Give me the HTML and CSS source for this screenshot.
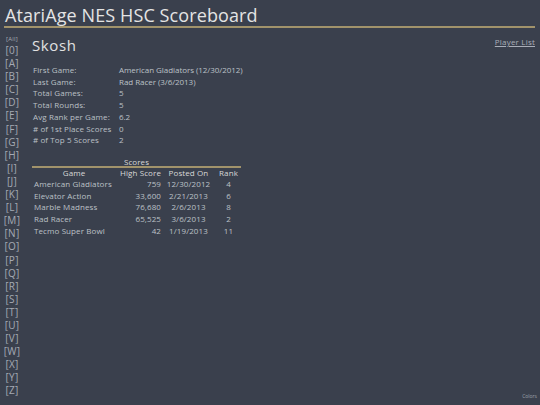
FILE: index.html
```html
<!DOCTYPE html>
<html>
<head>
<meta charset="utf-8">
<link rel="stylesheet" href="styles.css">
</head>
<body>
<header class="top">
  <h1 class="title">AtariAge NES HSC Scoreboard</h1>
</header>
<div class="layout">
  <nav class="letters">
    <a class="all">[All]</a>
    <a>[0]</a><a>[A]</a><a>[B]</a><a>[C]</a><a>[D]</a><a>[E]</a><a>[F]</a><a>[G]</a><a>[H]</a><a>[I]</a><a>[J]</a><a>[K]</a><a>[L]</a><a>[M]</a><a>[N]</a><a>[O]</a><a>[P]</a><a>[Q]</a><a>[R]</a><a>[S]</a><a>[T]</a><a>[U]</a><a>[V]</a><a>[W]</a><a>[X]</a><a>[Y]</a><a>[Z]</a>
  </nav>
  <main class="content">
    <div class="head-row">
      <h2 class="player">Skosh</h2>
      <a class="plist">Player List</a>
    </div>
    <table class="info">
      <tr><td class="lbl">First Game:</td><td>American Gladiators (12/30/2012)</td></tr>
      <tr><td class="lbl">Last Game:</td><td>Rad Racer (3/6/2013)</td></tr>
      <tr><td class="lbl">Total Games:</td><td>5</td></tr>
      <tr><td class="lbl">Total Rounds:</td><td>5</td></tr>
      <tr><td class="lbl">Avg Rank per Game:</td><td>6.2</td></tr>
      <tr><td class="lbl"># of 1st Place Scores</td><td>0</td></tr>
      <tr><td class="lbl"># of Top 5 Scores</td><td>2</td></tr>
    </table>
    <div class="scores">
      <div class="caption">Scores</div>
      <div class="srow shead"><span class="c-game">Game</span><span class="c-score">High Score</span><span class="c-date">Posted On</span><span class="c-rank">Rank</span></div>
      <div class="srow"><span class="c-game">American Gladiators</span><span class="c-score">759</span><span class="c-date">12/30/2012</span><span class="c-rank">4</span></div>
      <div class="srow"><span class="c-game">Elevator Action</span><span class="c-score">33,600</span><span class="c-date">2/21/2013</span><span class="c-rank">6</span></div>
      <div class="srow"><span class="c-game">Marble Madness</span><span class="c-score">76,680</span><span class="c-date">2/6/2013</span><span class="c-rank">8</span></div>
      <div class="srow"><span class="c-game">Rad Racer</span><span class="c-score">65,525</span><span class="c-date">3/6/2013</span><span class="c-rank">2</span></div>
      <div class="srow"><span class="c-game">Tecmo Super Bowl</span><span class="c-score">42</span><span class="c-date">1/19/2013</span><span class="c-rank">11</span></div>
    </div>
  </main>
</div>
<footer class="foot"><a class="colors">Colors</a></footer>
</body>
</html>
```
FILE: styles.css
```css
html, body {
  margin: 0;
  padding: 0;
}
body {
  background: #3a404d;
  color: #c4c7cd;
  font-family: "Open Sans", "DejaVu Sans", sans-serif;
  width: 540px;
  height: 405px;
  overflow: hidden;
  position: relative;
}
.top {
  padding: 4px 5px 0 4px;
}
.title {
  margin: 0;
  font-size: 18px;
  font-weight: normal;
  line-height: 22px;
  color: #e4e4e4;
  padding-left: 1px;
  border-bottom: 2px solid #a1936b;
  letter-spacing: 0.1px;
}
.layout {
  display: flex;
  padding-top: 7px;
}
.letters {
  width: 32px;
  display: flex;
  flex-direction: column;
  align-items: center;
  padding-right: 8px;
  box-sizing: border-box;
}
.letters a {
  font-size: 10px;
  line-height: 13.1px;
  color: #a5aab4;
  letter-spacing: 0.3px;
}
.letters a.all {
  font-size: 6px;
  line-height: 9px;
}
.content {
  flex: 1;
  padding-right: 5px;
}
.head-row {
  display: flex;
  justify-content: space-between;
  align-items: flex-start;
}
.player {
  margin: 0;
  font-size: 15px;
  font-weight: normal;
  color: #e2e2e2;
  line-height: 20px;
  letter-spacing: 0.6px;
}
.plist {
  font-size: 8px;
  color: #a9aeb8;
  text-decoration: underline;
  margin-top: 1px;
  letter-spacing: 0.2px;
}
.info {
  border-collapse: collapse;
  margin-top: 9px;
  font-size: 8px;
  color: #bcc0c7;
  letter-spacing: -0.05px;
}
.info td {
  padding: 0 0 0 1px;
  height: 11.7px;
  line-height: 11.7px;
  white-space: nowrap;
}
.info td.lbl {
  width: 85px;
  letter-spacing: 0.1px;
}
.scores {
  margin-top: 11px;
  font-size: 8px;
  color: #bcc0c7;
  width: 209px;
  letter-spacing: 0.1px;
}
.caption {
  color: #d8d8d8;
  line-height: 9px;
  border-bottom: 2px solid #a1936b;
  text-align: center;
}
.srow {
  display: flex;
  line-height: 11.75px;
  white-space: nowrap;
}
.shead {
  color: #d8d8d8;
  line-height: 10px;
  margin-bottom: 0;
}
.c-game { text-align: left; width: 80px; padding-left: 2px; }
.shead .c-game { text-align: center; }
.c-score { text-align: right; width: 47px; }
.c-date { text-align: center; width: 55px; }
.c-rank { text-align: center; width: 25px; }
.foot {
  position: absolute;
  right: 3px;
  bottom: 2px;
}
.colors {
  font-size: 5px;
  color: #9aa0aa;
}
```
